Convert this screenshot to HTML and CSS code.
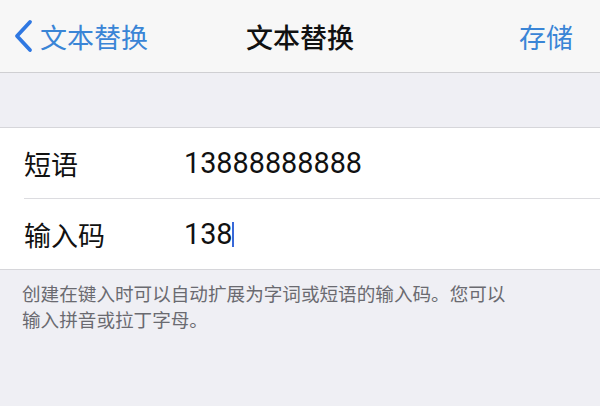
FILE: index.html
```html
<!DOCTYPE html>
<html lang="zh-CN">
<head>
    <meta charset="UTF-8">
    <meta name="viewport" content="width=device-width, initial-scale=1.0">
    <title>文本替换</title>
    <link rel="stylesheet" href="styles.css">
</head>
<body>
    <header class="navBar">
        <a class="navBack" href="#">
            <svg class="chevron" width="22" height="34" viewBox="0 0 22 34">
                <path d="M18 3 L5 17 L18 31" fill="none" stroke="currentColor" stroke-width="3.8" stroke-linecap="round" stroke-linejoin="round"/>
            </svg>
            <span>文本替换</span>
        </a>
        <h1 class="navTitle">文本替换</h1>
        <a class="navSave" href="#">存储</a>
    </header>

    <div class="spacer"></div>

    <section class="formList">
        <div class="formRow">
            <span class="rowLabel">短语</span>
            <span class="rowValue">13888888888</span>
        </div>
        <div class="formRow">
            <span class="rowLabel">输入码</span>
            <span class="rowValue">138<span class="caret"></span></span>
        </div>
    </section>

    <p class="footerNote">创建在键入时可以自动扩展为字词或短语的输入码。您可以输入拼音或拉丁字母。</p>
</body>
</html>
```

FILE: styles.css
```css
body {
    margin: 0;
    width: 600px;
    height: 406px;
    overflow: hidden;
    background-color: #efeff4;
    font-family: Roboto, "Noto Sans CJK SC", sans-serif;
    color: #111111;
}

.navBar {
    height: 72px;
    display: flex;
    align-items: center;
    justify-content: space-between;
    background-color: #f7f7f7;
    border-bottom: 1px solid #cfcfd2;
    padding: 0 27px 0 12px;
    position: relative;
}

.navBack,
.navSave {
    color: #3a85d6;
    text-decoration: none;
    font-size: 27px;
    display: flex;
    align-items: center;
}

.navBack span {
    margin-left: 6px;
}

.chevron {
    color: #2f78e2;
}

.navTitle {
    position: absolute;
    left: 0;
    right: 0;
    text-align: center;
    margin: 0;
    font-size: 27px;
    font-weight: 500;
    pointer-events: none;
}

.spacer {
    height: 54px;
}

.formList {
    background-color: #ffffff;
    border-top: 1px solid #d6d6da;
    border-bottom: 1px solid #d6d6da;
}

.formRow {
    height: 70px;
    display: flex;
    align-items: center;
    margin-left: 24px;
    font-size: 27px;
}

.formRow + .formRow {
    border-top: 1px solid #dcdce0;
}

.rowLabel {
    width: 160px;
}

.rowValue {
    font-size: 28.8px;
    display: flex;
    align-items: center;
}

.caret {
    display: inline-block;
    width: 2px;
    height: 25px;
    margin-left: -1px;
    background-color: #3868d8;
}

.footerNote {
    margin: 12px 0 0;
    padding: 0 80px 0 22px;
    font-size: 18.6px;
    line-height: 26px;
    color: #6a6a70;
}
```
